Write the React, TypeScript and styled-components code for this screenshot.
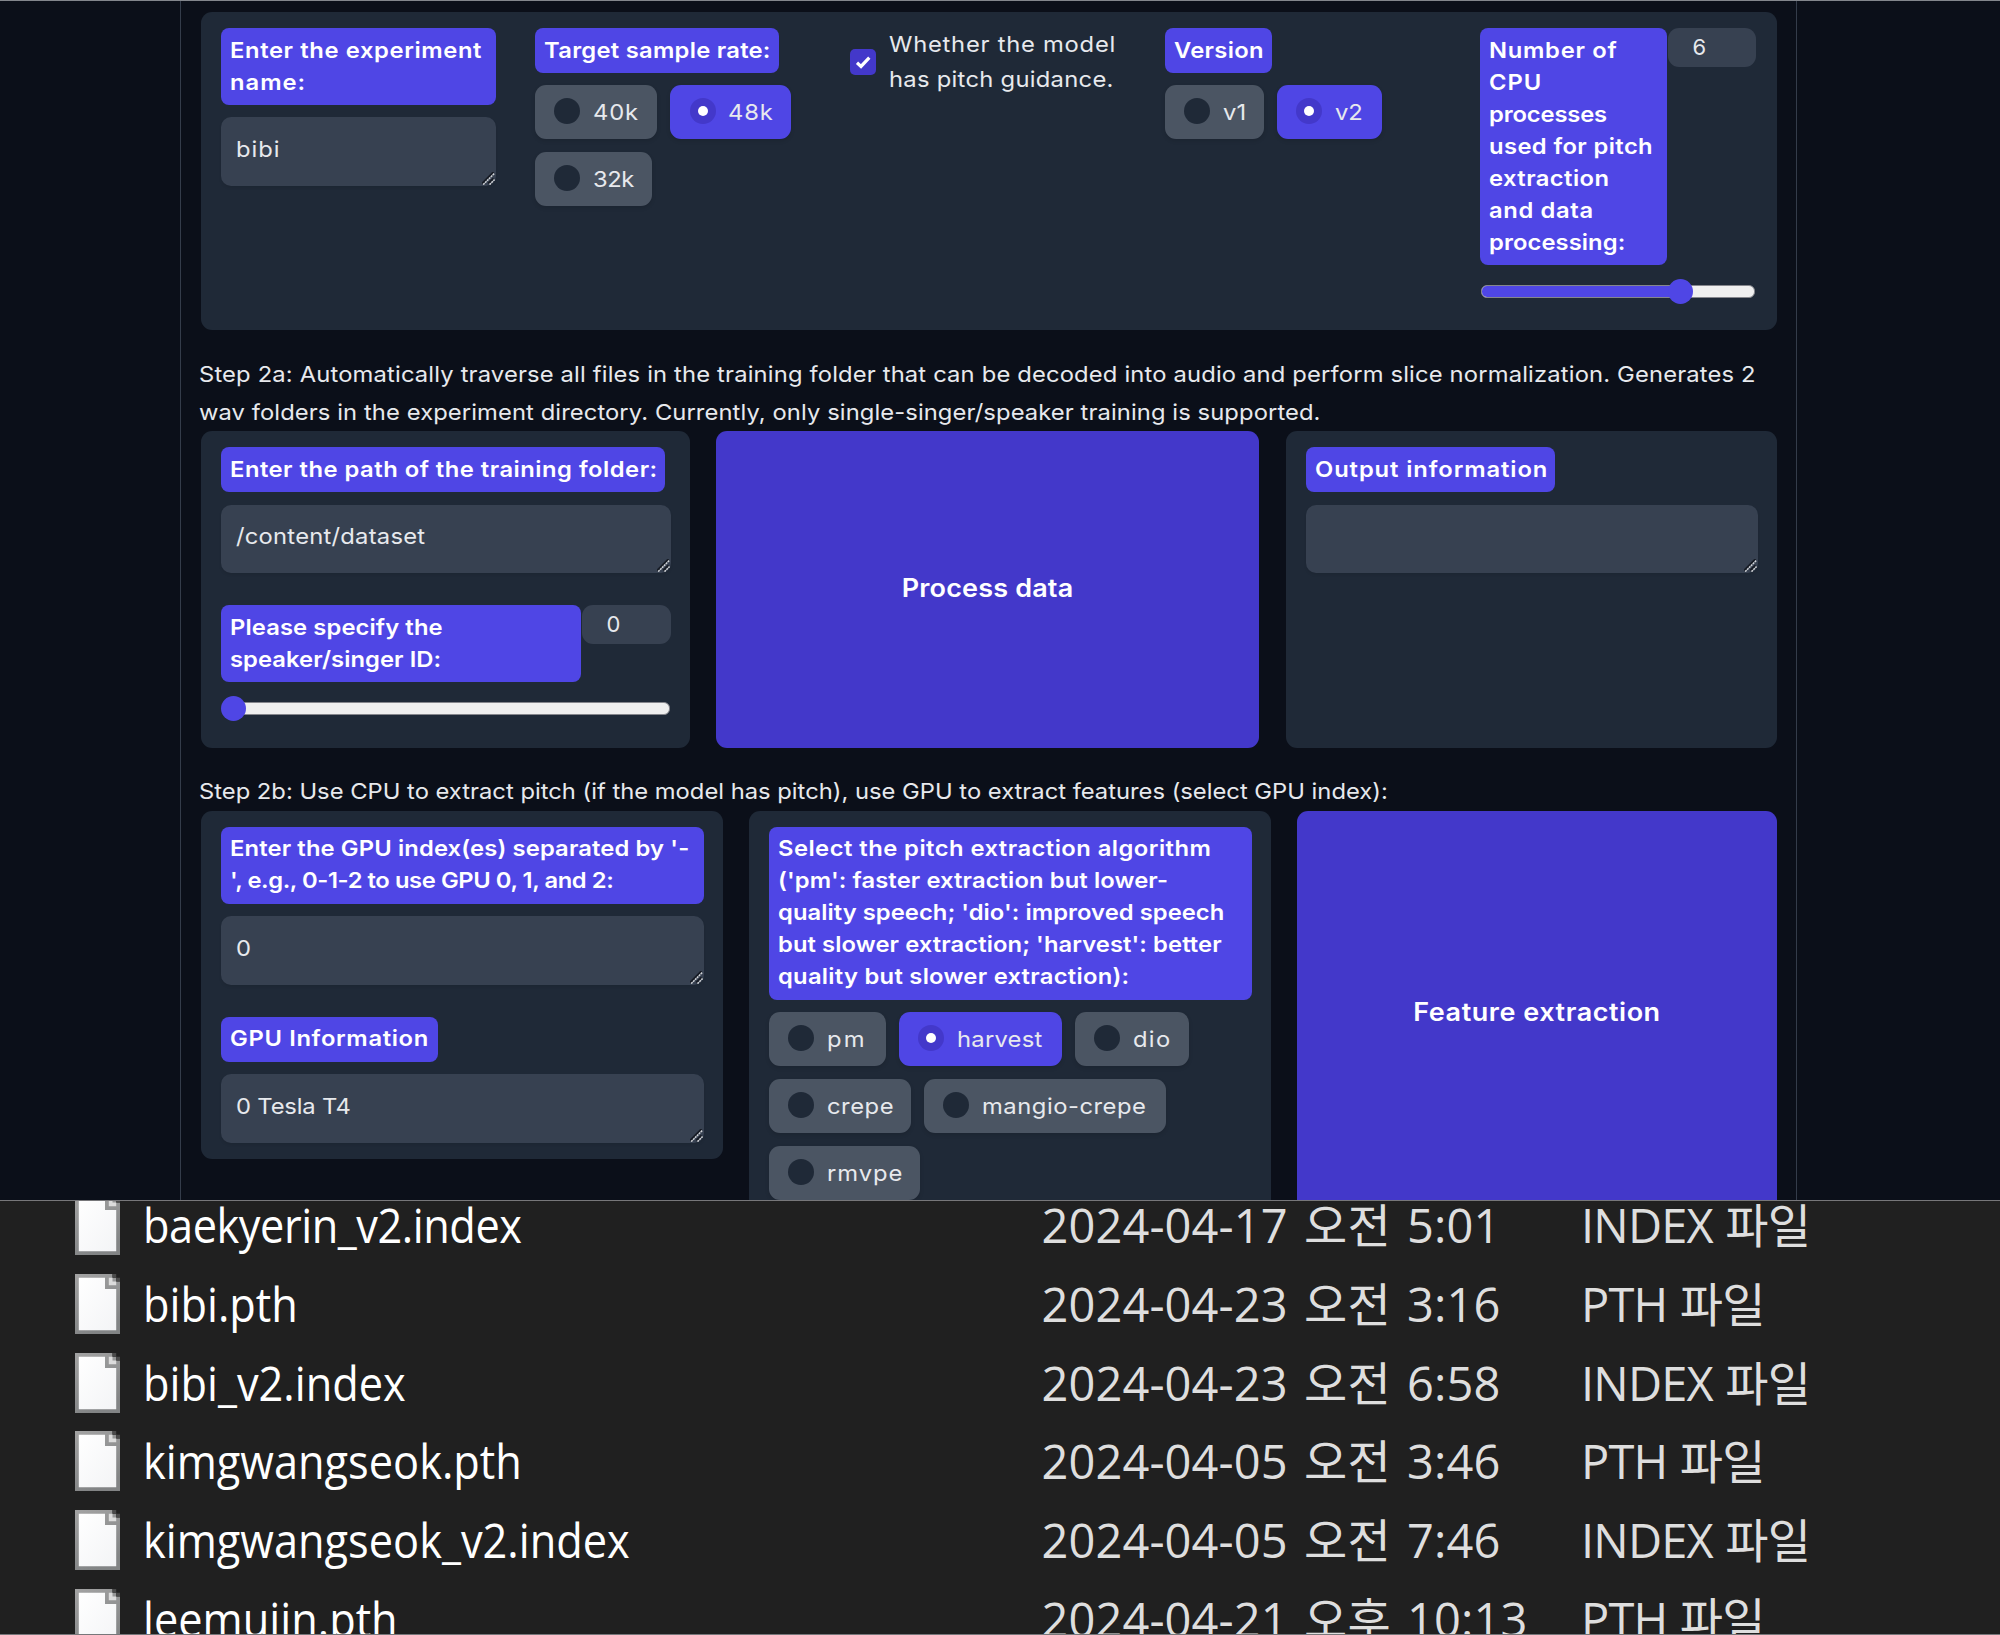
import React from "react";
import styled, { createGlobalStyle, css } from "styled-components";

const color = {
  page: "#0b0f19",
  panel: "#1f2937",
  field: "#374151",
  option: "#4b5563",
  accent: "#4f46e5",
  accentDeep: "#4338ca",
  text: "#e7e9ed",
  explorer: "#202020",
};

const GlobalStyle = createGlobalStyle`
  * { box-sizing: border-box; }
  html, body { margin: 0; padding: 0; background: ${color.page}; }
  body { font-family: Inter, "Liberation Sans", sans-serif; }
`;

const Screen = styled.div`
  display: flex;
  flex-direction: column;
  width: 2000px;
  height: 1635px;
  overflow: hidden;
`;

/* ---------- training page ---------- */

const TrainingPage = styled.main`
  height: 1200px;
  flex: none;
  overflow: hidden;
  border-top: 1px solid #83868c;
  background: ${color.page};
`;

const TabBody = styled.div`
  margin-left: 180px;
  width: 1617px;
  height: 1199px;
  padding: 11px 19px 0 18.5px;
  border: solid #343c4a;
  border-width: 0 1px;
  display: flex;
  flex-direction: column;
`;

const Section = styled.section<{ $height: number; $columns: string; $gap: number }>`
  display: grid;
  flex: none;
  margin-left: 1px;
  height: ${(p) => p.$height}px;
  grid-template-columns: ${(p) => p.$columns};
  column-gap: ${(p) => p.$gap}px;
  align-items: stretch;
`;

const Panel = styled.div<{ $columns?: string; $hug?: boolean }>`
  background: ${color.panel};
  border-radius: 11px;
  padding: 16px 19px 16px 20px;
  display: grid;
  grid-template-columns: ${(p) => p.$columns ?? "minmax(0, 1fr)"};
  column-gap: 39px;
  row-gap: 32px;
  align-content: start;
  ${(p) => p.$hug && css`align-self: start;`}
`;

const Field = styled.div`
  display: flex;
  flex-direction: column;
  align-items: flex-start;
  gap: 12.6px;
  min-width: 0;
`;

const Label = styled.div<{ $width: string }>`
  flex: none;
  width: ${(p) => p.$width};
  padding: 5.6px 0 7.3px 9px;
  border-radius: 8px;
  background: ${color.accent};
  color: #fff;
  font-size: 22px;
  font-weight: 600;
  line-height: 32px;
`;

/* One line of the wide geometric face used across the page. */
const Line = styled.span<{ $track?: number; $centered?: boolean }>`
  display: block;
  white-space: nowrap;
  letter-spacing: ${(p) => p.$track ?? 0}px;
  transform: scaleX(1.08);
  transform-origin: ${(p) => (p.$centered ? "center" : "left")};
`;

const TextBox = styled.div`
  position: relative;
  width: 100%;
  height: 68.6px;
  padding: 14.5px 15px;
  border-radius: 10px;
  background: ${color.field};
  box-shadow: 0 2px 3px rgba(0, 0, 0, 0.08);
  color: ${color.text};
  font-size: 22px;
  line-height: 34.5px;
`;

const GripSvg = styled.svg`
  position: absolute;
  right: 1px;
  bottom: 1px;
  width: 13px;
  height: 13px;
`;

const Options = styled.div`
  display: flex;
  flex-wrap: wrap;
  gap: 13px;
`;

const Option = styled.div<{ $on?: boolean; $width: number }>`
  display: flex;
  align-items: center;
  gap: 12.5px;
  width: ${(p) => p.$width}px;
  height: 54px;
  padding-left: 19.5px;
  border-radius: 11px;
  background: ${(p) => (p.$on ? color.accent : color.option)};
  box-shadow: 0 2px 4px rgba(0, 0, 0, 0.12);
  color: ${color.text};
  font-size: 22px;
`;

const Dot = styled.span<{ $on?: boolean }>`
  display: flex;
  flex: none;
  align-items: center;
  justify-content: center;
  width: 26px;
  height: 26px;
  margin-top: -2px;
  border-radius: 50%;
  background: ${(p) => (p.$on ? color.accentDeep : color.panel)};
  &::after {
    content: "";
    width: 10px;
    height: 10px;
    border-radius: 50%;
    background: ${(p) => (p.$on ? "#fff" : "transparent")};
  }
`;

const CheckRow = styled.div`
  display: flex;
  align-self: start;
  align-items: center;
  gap: 13px;
  margin-top: -1px;
  color: ${color.text};
  font-size: 22px;
  line-height: 34.5px;
`;

const CheckBox = styled.span`
  display: flex;
  flex: none;
  align-items: center;
  justify-content: center;
  width: 26px;
  height: 26px;
  border-radius: 5px;
  background: ${color.accentDeep};
`;

const SliderField = styled.div`
  display: flex;
  flex-direction: column;
  gap: 20px;
  min-width: 0;
`;

const SliderHead = styled.div`
  display: flex;
  align-items: flex-start;
  gap: 1px;
`;

const NumberBox = styled.div`
  flex: 1;
  height: 39px;
  padding-left: 25px;
  border-radius: 11px;
  background: ${color.field};
  color: ${color.text};
  font-size: 22px;
  line-height: 39px;
`;

const Track = styled.div`
  display: flex;
  align-items: center;
  height: 13px;
  margin: 0 1px;
  border: 1px solid #85868c;
  border-radius: 6px;
  background: #efefef;
`;

const Fill = styled.div<{ $length: number }>`
  flex: none;
  width: ${(p) => p.$length}px;
  height: 11px;
  border-radius: 5px 0 0 5px;
  background: ${color.accent};
`;

const Thumb = styled.div`
  flex: none;
  width: 25px;
  height: 25px;
  margin-left: -14px;
  border-radius: 50%;
  background: ${color.accent};
`;

const Step = styled.p<{ $top: number }>`
  flex: none;
  margin: ${(p) => p.$top}px 0 0 -0.5px;
  color: ${color.text};
  font-size: 22px;
  line-height: 37.6px;
`;

const ActionButton = styled.button`
  border: 0;
  padding: 0 0 3px;
  border-radius: 11px;
  background: ${color.accentDeep};
  color: #fff;
  font: 600 25px Inter, "Liberation Sans", sans-serif;
`;

/* ---------- file explorer ---------- */

const Explorer = styled.section`
  flex: none;
  height: 435px;
  overflow: hidden;
  border: solid #77777a;
  border-width: 1px 0;
  background: ${color.explorer};
`;

const FileList = styled.div`
  display: grid;
  grid-auto-rows: 78.7px;
  margin-top: -15px;
`;

const FileRow = styled.div`
  display: grid;
  grid-template-columns: 45px 900px 541px 1fr;
  align-items: center;
  padding-left: 75px;
  font: 400 47px / 70px "Open Sans", "Noto Sans CJK KR", sans-serif;
  white-space: nowrap;
`;

const FileName = styled.span<{ $track?: number }>`
  margin-left: 22.5px;
  color: #fff;
  letter-spacing: ${(p) => p.$track ?? 0}px;
  transform: scaleX(0.922);
  transform-origin: left;
`;

const FileDate = styled.span`
  padding-left: 21.5px;
  color: #dedede;
  letter-spacing: 0.1px;
  word-spacing: 4px;
`;

const FileType = styled.span`
  padding-left: 20px;
  color: #dedede;
  letter-spacing: -0.8px;
  word-spacing: 1px;
`;

const Grip = () => (
  <GripSvg viewBox="0 0 13 13" fill="none">
    <path d="M0 11.5 11.5 0M6.3 11.5 11.5 6.3" stroke="#171c25" strokeWidth="1.8" />
    <path d="M1.2 12.6 12.6 1.2M7.5 12.6 12.6 7.5" stroke="#d3d5d8" strokeWidth="1.5" strokeDasharray="2 .7" />
  </GripSvg>
);

const CheckMark = () => (
  <svg width="26" height="26" viewBox="0 0 26 26" fill="none">
    <path d="M7 13.8 11 17.4 19.3 8.6" stroke="#fff" strokeWidth="3.2" />
  </svg>
);

const FileIcon = () => (
  <svg width="45" height="60" viewBox="0 0 45 60">
    <defs>
      <linearGradient id="edge" x1="0" y1="0" x2="0.4" y2="1">
        <stop offset="0" stopColor="#a3a3a3" />
        <stop offset="1" stopColor="#828485" />
      </linearGradient>
      <linearGradient id="sheet" x1="0" y1="0" x2="1" y2="1">
        <stop offset="0" stopColor="#ffffff" />
        <stop offset="1" stopColor="#f3f4f6" />
      </linearGradient>
    </defs>
    <path d="M0 0H37.5V3.8H41.2V7.5H45V60H0Z" fill="url(#edge)" />
    <path d="M3.8 3.8H30V15H41.2V56.2H3.8Z" fill="url(#sheet)" />
    <path d="M33.8 3.8H37.5V7.5H41.2V11.2H33.8Z" fill="#dcdcdc" />
    <path d="M37.5 0H41.2V3.8H37.5ZM41.2 3.8H45V7.5H41.2Z" fill="#4a4a4a" />
  </svg>
);

type OptionItem = { text: string; width: number; track?: number; on?: boolean };

const RadioGroup = ({ items }: { items: OptionItem[] }) => (
  <Options>
    {items.map((o) => (
      <Option key={o.text} $width={o.width} $on={o.on}>
        <Dot $on={o.on} />
        <Line $track={o.track}>{o.text}</Line>
      </Option>
    ))}
  </Options>
);

type TextLine = [string, number];

const LabelBox = ({ lines, width = "100%" }: { lines: TextLine[]; width?: string }) => (
  <Label $width={width}>
    {lines.map(([t, track]) => (
      <Line key={t} $track={track}>
        {t}
      </Line>
    ))}
  </Label>
);

const sampleRates: OptionItem[] = [
  { text: "40k", width: 122.5, track: 0.8 },
  { text: "48k", width: 121, track: 0.8, on: true },
  { text: "32k", width: 117, track: -0.4 },
];

const versions: OptionItem[] = [
  { text: "v1", width: 99, track: 0.1 },
  { text: "v2", width: 105, track: 0, on: true },
];

const pitchAlgorithms: OptionItem[] = [
  { text: "pm", width: 117, track: 2 },
  { text: "harvest", width: 163, track: 0.23, on: true },
  { text: "dio", width: 114, track: 1.2 },
  { text: "crepe", width: 142, track: 0.5 },
  { text: "mangio-crepe", width: 242, track: 0.49 },
  { text: "rmvpe", width: 151.5, track: 0.9 },
];

const files = [
  { name: "baekyerin_v2.index", track: -0.5, date: "2024-04-17 오전 5:01", type: "INDEX 파일" },
  { name: "bibi.pth", date: "2024-04-23 오전 3:16", type: "PTH 파일" },
  { name: "bibi_v2.index", date: "2024-04-23 오전 6:58", type: "INDEX 파일" },
  { name: "kimgwangseok.pth", date: "2024-04-05 오전 3:46", type: "PTH 파일" },
  { name: "kimgwangseok_v2.index", date: "2024-04-05 오전 7:46", type: "INDEX 파일" },
  { name: "leemujin.pth", date: "2024-04-21 오후 10:13", type: "PTH 파일" },
];

export default function App() {
  return (
    <Screen>
      <GlobalStyle />
      <TrainingPage>
        <TabBody>
          <Section $height={318} $columns="1576px" $gap={0}>
            <Panel $columns="275px 276px 276px 276px 276px">
              <Field>
                <LabelBox lines={[["Enter the experiment", 0.57], ["name:", 0.92]]} />
                <TextBox>
                  <Line $track={0.88}>bibi</Line>
                  <Grip />
                </TextBox>
              </Field>
              <Field>
                <LabelBox width="244.5px" lines={[["Target sample rate:", 0.25]]} />
                <RadioGroup items={sampleRates} />
              </Field>
              <CheckRow>
                <CheckBox>
                  <CheckMark />
                </CheckBox>
                <div>
                  <Line $track={0.7}>Whether the model</Line>
                  <Line $track={0.26}>has pitch guidance.</Line>
                </div>
              </CheckRow>
              <Field>
                <LabelBox width="107.5px" lines={[["Version", 0.29]]} />
                <RadioGroup items={versions} />
              </Field>
              <SliderField>
                <SliderHead>
                  <LabelBox
                    width="187px"
                    lines={[
                      ["Number of", 0.66],
                      ["CPU", 0.9],
                      ["processes", -0.13],
                      ["used for pitch", 0.36],
                      ["extraction", 0.4],
                      ["and data", 0.6],
                      ["processing:", 0.08],
                    ]}
                  />
                  <NumberBox>6</NumberBox>
                </SliderHead>
                <Track>
                  <Fill $length={200} />
                  <Thumb />
                </Track>
              </SliderField>
            </Panel>
          </Section>

          <Step $top={26}>
            <Line $track={0.15}>
              Step 2a: Automatically traverse all files in the training folder that can be decoded into audio and
              perform slice normalization. Generates 2
            </Line>
            <Line $track={0.085}>
              wav folders in the experiment directory. Currently, only single-singer/speaker training is supported.
            </Line>
          </Step>

          <Section $height={316.5} $columns="489px 543px 491px" $gap={26.5}>
            <Panel>
              <Field>
                <LabelBox width="444.5px" lines={[["Enter the path of the training folder:", 0.46]]} />
                <TextBox>
                  <Line $track={0.22}>/content/dataset</Line>
                  <Grip />
                </TextBox>
              </Field>
              <SliderField>
                <SliderHead>
                  <LabelBox width="360px" lines={[["Please specify the", 0.1], ["speaker/singer ID:", 0.06]]} />
                  <NumberBox>0</NumberBox>
                </SliderHead>
                <Track>
                  <Fill $length={12} />
                  <Thumb />
                </Track>
              </SliderField>
            </Panel>
            <ActionButton>
              <Line $centered $track={0.15}>
                Process data
              </Line>
            </ActionButton>
            <Panel>
              <Field>
                <LabelBox width="249.5px" lines={[["Output information", 0.83]]} />
                <TextBox>
                  <Grip />
                </TextBox>
              </Field>
            </Panel>
          </Section>

          <Step $top={25.5}>
            <Line $track={0}>
              Step 2b: Use CPU to extract pitch (if the model has pitch), use GPU to extract features (select GPU
              index):
            </Line>
          </Step>

          <Section $height={406} $columns="522px 522px 480px" $gap={26}>
            <Panel $hug>
              <Field>
                <LabelBox
                  lines={[["Enter the GPU index(es) separated by '-", 0.12], ["', e.g., 0-1-2 to use GPU 0, 1, and 2:", -0.39]]}
                />
                <TextBox>
                  <Line>0</Line>
                  <Grip />
                </TextBox>
              </Field>
              <Field>
                <LabelBox width="217px" lines={[["GPU Information", 0.6]]} />
                <TextBox>
                  <Line $track={-0.15}>0 Tesla T4</Line>
                  <Grip />
                </TextBox>
              </Field>
            </Panel>
            <Panel>
              <Field>
                <LabelBox
                  lines={[
                    ["Select the pitch extraction algorithm", 0.43],
                    ["('pm': faster extraction but lower-", 0.1],
                    ["quality speech; 'dio': improved speech", 0.05],
                    ["but slower extraction; 'harvest': better", 0.08],
                    ["quality but slower extraction):", 0.25],
                  ]}
                />
                <RadioGroup items={pitchAlgorithms} />
              </Field>
            </Panel>
            <ActionButton>
              <Line $centered $track={0.5}>
                Feature extraction
              </Line>
            </ActionButton>
          </Section>
        </TabBody>
      </TrainingPage>

      <Explorer>
        <FileList>
          {files.map((f) => (
            <FileRow key={f.name}>
              <FileIcon />
              <FileName $track={f.track}>{f.name}</FileName>
              <FileDate>{f.date}</FileDate>
              <FileType>{f.type}</FileType>
            </FileRow>
          ))}
        </FileList>
      </Explorer>
    </Screen>
  );
}
